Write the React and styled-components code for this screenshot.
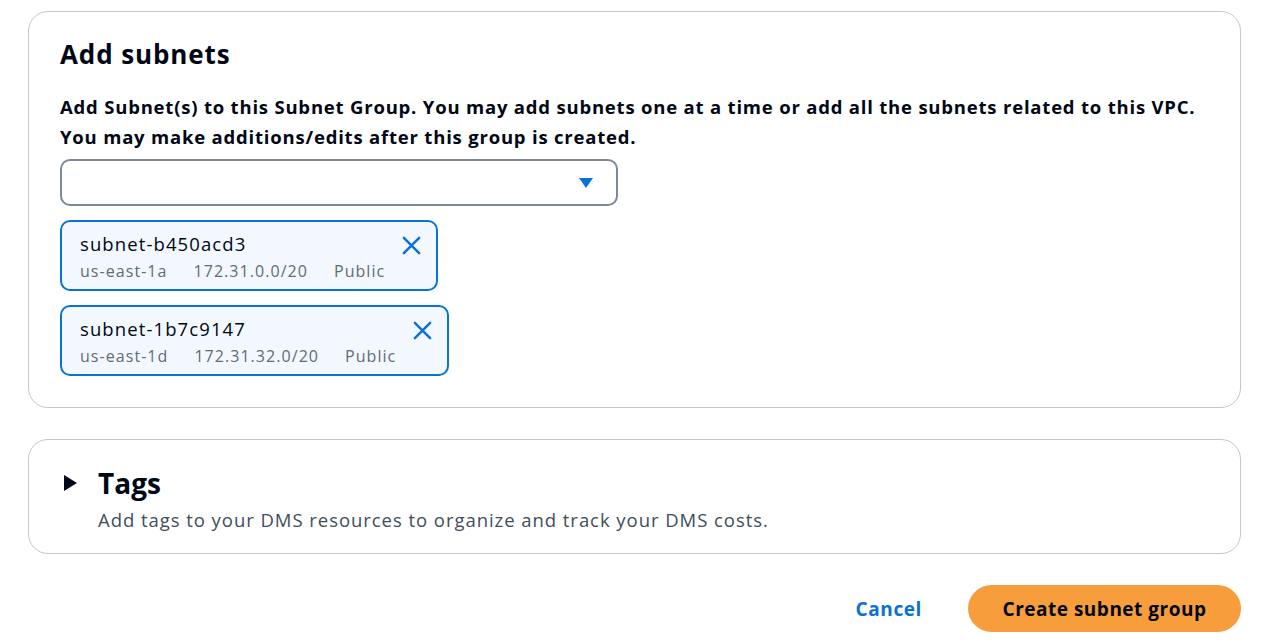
import React from 'react';
import styled, { createGlobalStyle } from 'styled-components';

const Global = createGlobalStyle`
  body {
    margin: 0;
    background: #ffffff;
    font-family: 'Open Sans', 'Noto Sans', sans-serif;
    color: #000716;
  }
`;

const Page = styled.div`
  width: 1263px;
  height: 644px;
  padding: 11px 22px 0 28px;
  box-sizing: border-box;
  display: flex;
  flex-direction: column;
`;

const Panel = styled.section`
  border: 1.5px solid #c6c6cd;
  border-radius: 20px;
  padding: ${p => p.$pad};
  margin-top: ${p => p.$top || 0}px;
  display: flex;
  flex-direction: column;
`;

const Title = styled.h2`
  margin: 0;
  font-size: 26px;
  font-weight: 700;
  line-height: 36px;
  letter-spacing: 0.9px;
`;

const Description = styled.p`
  margin: 20px 0 7px;
  font-size: 18.5px;
  font-weight: 700;
  line-height: 30px;
  letter-spacing: 0.8px;
`;

const Select = styled.div`
  width: 558px;
  height: 47px;
  box-sizing: border-box;
  border: 2px solid #7d8998;
  border-radius: 10px;
  display: flex;
  align-items: center;
  justify-content: flex-end;
  padding-right: 22px;
`;

const TokenList = styled.div`
  display: flex;
  flex-direction: column;
  align-items: flex-start;
  gap: 14px;
  margin-top: 14px;
`;

const Token = styled.div`
  box-sizing: border-box;
  height: 71px;
  border: 2px solid #0972d3;
  border-radius: 10px;
  background: #f2f8fd;
  padding: 8px 14px 0 18px;
  display: flex;
  align-items: flex-start;
  gap: 16px;
`;

const TokenName = styled.div`
  font-size: 18.5px;
  line-height: 28px;
  letter-spacing: 1.1px;
`;

const TokenMeta = styled.div`
  display: flex;
  gap: 26px;
  font-size: 16px;
  line-height: 26px;
  letter-spacing: 1.05px;
  color: #5f6b7a;
`;

const Remove = styled.button`
  border: none;
  background: none;
  padding: 0;
  margin-top: 5px;
  display: flex;
  color: #0972d3;
  cursor: pointer;
`;

const TagsHeader = styled.div`
  display: flex;
  align-items: center;
  gap: 20px;
`;

const TagsTitle = styled.h2`
  margin: 0;
  font-size: 28px;
  font-weight: 700;
  line-height: 36px;
`;

const TagsText = styled.p`
  margin: 5px 0 0 35px;
  font-size: 18.5px;
  line-height: 28px;
  letter-spacing: 0.95px;
  color: #414d5c;
`;

const Actions = styled.div`
  display: flex;
  justify-content: flex-end;
  align-items: center;
  gap: 46px;
  margin-top: 31px;
`;

const LinkButton = styled.button`
  border: none;
  background: none;
  font-family: inherit;
  font-size: 19px;
  font-weight: 700;
  letter-spacing: 0.6px;
  color: #0972d3;
  padding: 0;
`;

const Primary = styled.button`
  border: none;
  background: #f89d3b;
  border-radius: 24px;
  height: 47px;
  width: 273px;
  font-family: inherit;
  font-size: 19px;
  font-weight: 700;
  letter-spacing: 0.5px;
  color: #000716;
`;

const subnets = [
  { id: 'subnet-b450acd3', az: 'us-east-1a', cidr: '172.31.0.0/20', type: 'Public' },
  { id: 'subnet-1b7c9147', az: 'us-east-1d', cidr: '172.31.32.0/20', type: 'Public' },
];

const CloseIcon = () => (
  <svg width="21" height="21" viewBox="0 0 22 22">
    <path d="M3 3 L19 19 M19 3 L3 19" stroke="currentColor" strokeWidth="2.6" strokeLinecap="round" fill="none" />
  </svg>
);

const App = () => (
  <>
    <Global />
    <Page>
      <Panel $pad="24px 30px 31px 31px">
        <Title>Add subnets</Title>
        <Description>
          Add Subnet(s) to this Subnet Group. You may add subnets one at a time or add all the subnets related to this VPC.
          <br />
          You may make additions/edits after this group is created.
        </Description>
        <Select>
          <svg width="16" height="12" viewBox="0 0 16 12">
            <path d="M1 1 H15 L8 11 Z" fill="#0972d3" />
          </svg>
        </Select>
        <TokenList>
          {subnets.map(s => (
            <Token key={s.id}>
              <div>
                <TokenName>{s.id}</TokenName>
                <TokenMeta>
                  <span>{s.az}</span>
                  <span>{s.cidr}</span>
                  <span>{s.type}</span>
                </TokenMeta>
              </div>
              <Remove aria-label="Remove"><CloseIcon /></Remove>
            </Token>
          ))}
        </TokenList>
      </Panel>
      <Panel $pad="25px 30px 19px 34px" $top={31}>
        <TagsHeader>
          <svg width="15" height="18" viewBox="0 0 15 18">
            <path d="M1 1 L14 9 L1 17 Z" fill="#000716" />
          </svg>
          <TagsTitle>Tags</TagsTitle>
        </TagsHeader>
        <TagsText>Add tags to your DMS resources to organize and track your DMS costs.</TagsText>
      </Panel>
      <Actions>
        <LinkButton>Cancel</LinkButton>
        <Primary>Create subnet group</Primary>
      </Actions>
    </Page>
  </>
);

export default App;
